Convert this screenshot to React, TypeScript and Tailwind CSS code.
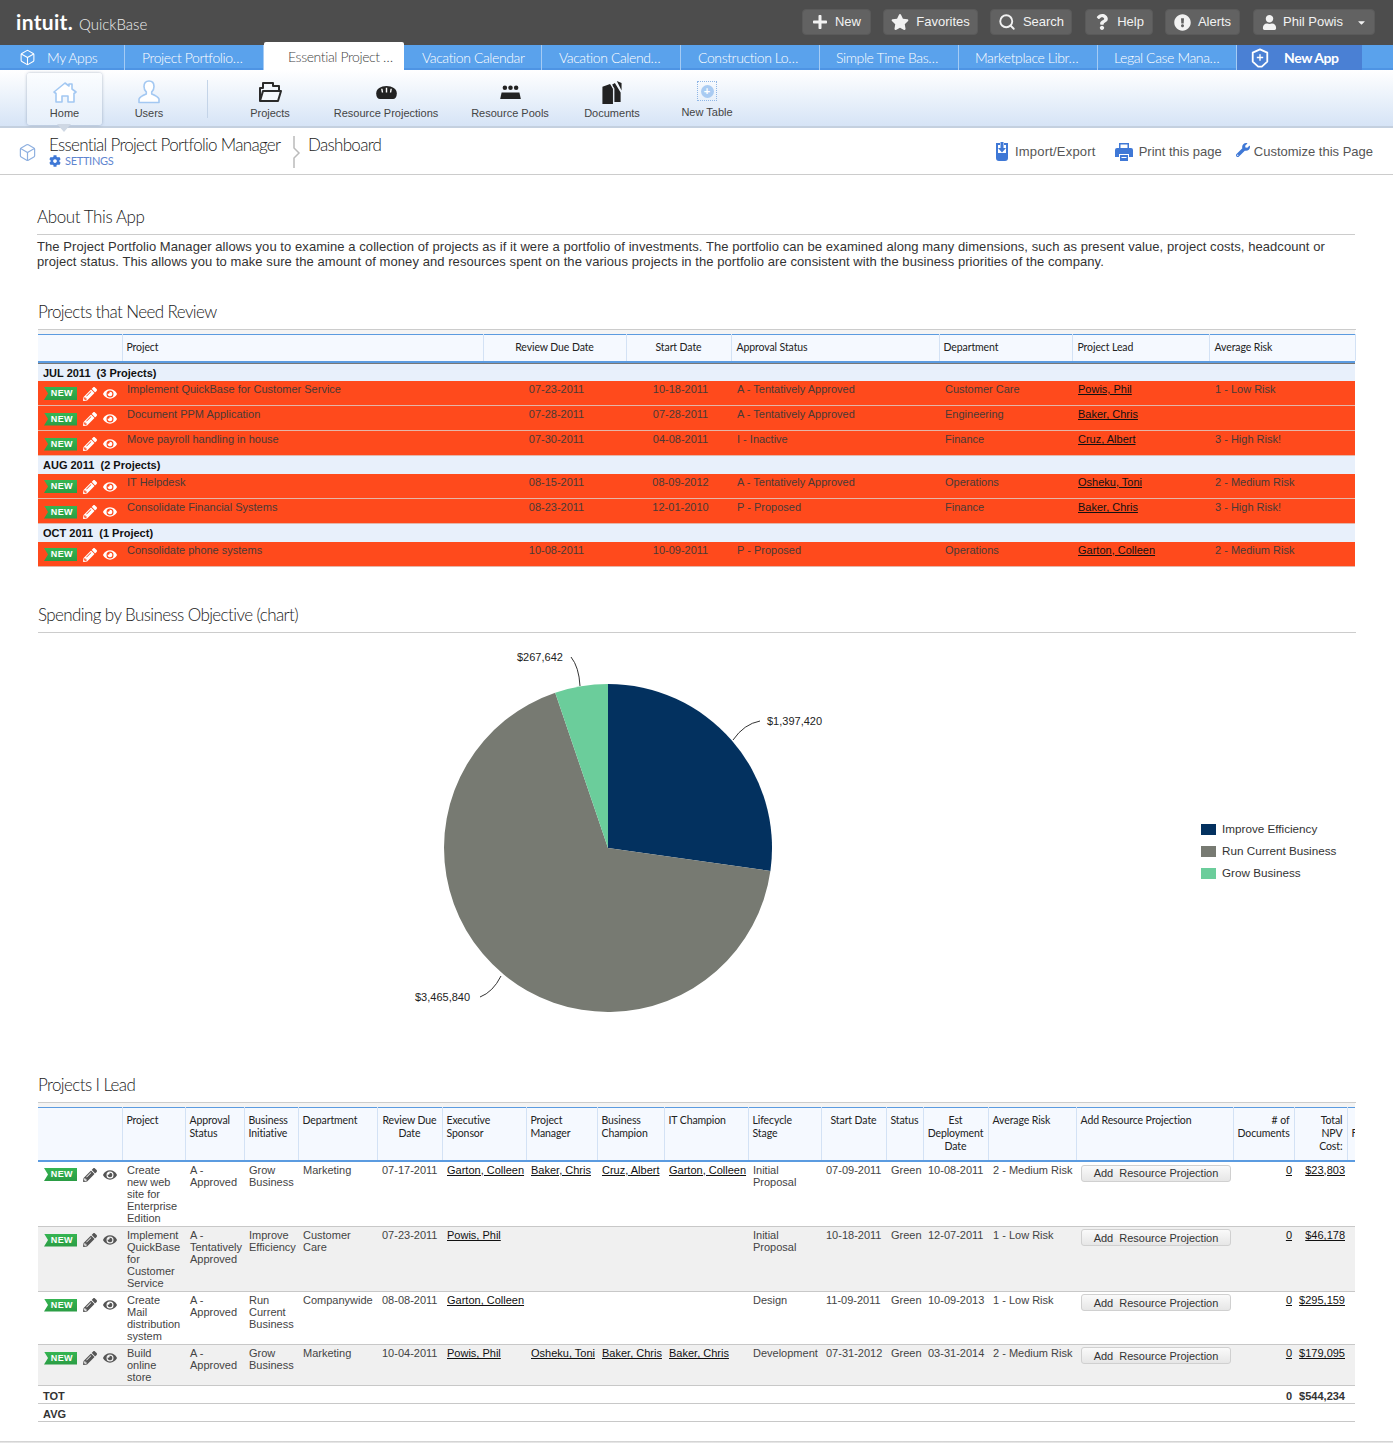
import { FaPlus, FaStar, FaQuestion, FaExclamationCircle, FaCaretDown, FaPencilAlt, FaEye, FaWrench, FaCog, FaUser } from "react-icons/fa";
import { Box, Search } from "lucide-react";

const gill = "[font-family:Lato,sans-serif]";

const tabs = [
  { label: "Project Portfolio…", w: "w-[139px]", pl: "pl-[17px]" },
  { label: "Essential Project …", active: true, w: "w-[140px]", pl: "pl-[24px]" },
  { label: "Vacation Calendar", w: "w-[138px]", pl: "pl-[18px]" },
  { label: "Vacation Calend…", w: "w-[139px]", pl: "pl-[17px]" },
  { label: "Construction Lo…", w: "w-[139px]", pl: "pl-[17px]" },
  { label: "Simple Time Bas…", w: "w-[139px]", pl: "pl-[16px]" },
  { label: "Marketplace Libr…", w: "w-[139px]", pl: "pl-[16px]" },
  { label: "Legal Case Mana…", w: "w-[139px]", pl: "pl-[16px]" },
];

function TopButton({ icon, label, w }: { icon: React.ReactNode; label: string; w: string }) {
  return (
    <div className={`flex h-[26px] ${w} items-center justify-center gap-[7px] rounded-[4px] border border-[#5a5a5a] bg-[#626262] text-[13px] text-[#f2f2f2]`}>
      {icon}
      <span>{label}</span>
    </div>
  );
}

function HomeIcon() {
  return (
    <svg viewBox="0 0 24 22" className="h-[22px] w-[24px]" fill="#ffffff" stroke="#a3c8f2" strokeWidth="1.6" strokeLinejoin="round">
      <path d="M1 11L12 2l4 3V3h3v5l4 3-2 1.500V21h-6v-6H9v6H3v-8.500z" />
    </svg>
  );
}

function UserIcon() {
  return (
    <svg viewBox="0 0 22 24" className="h-[24px] w-[22px]" fill="#ffffff" stroke="#a3c8f2" strokeWidth="1.6" strokeLinejoin="round">
      <path d="M11 1c3.500 0 5 2.500 5 5.500 0 2.500-1 4.500-2.300 5.500v2c2.500 1 6.300 2.500 7.300 5v3.500H1V19c1-2.500 4.800-4 7.300-5v-2C7 11 6 9 6 6.500 6 3.500 7.500 1 11 1z" />
    </svg>
  );
}

function FolderIcon() {
  return (
    <svg viewBox="0 0 24 22" className="h-[22px] w-[24px]" fill="none" stroke="#2a2a2a" strokeWidth="2" strokeLinejoin="round">
      <path d="M2 20V7h3V2h10v3h6v5" />
      <path d="M5 10h18l-3 10H2z" fill="#f4f7fb" />
    </svg>
  );
}

function Bread({ className }: { className?: string }) {
  return (
    <svg viewBox="0 0 24 16" className={className} fill="#222">
      <path d="M1 9C1 4 6 1 12 1s11 3 11 8c0 4-2 6-4 6H5c-2 0-4-2-4-6z" />
      <path d="M7 4l.7 4M12 3v5M17 4l-.7 4" stroke="#fff" strokeWidth="1.500" />
    </svg>
  );
}

function Pools({ className }: { className?: string }) {
  return (
    <svg viewBox="0 0 24 16" className={className} fill="#222">
      <circle cx="6" cy="3" r="2.400" />
      <circle cx="12" cy="3" r="2.400" />
      <circle cx="18" cy="3" r="2.400" />
      <path d="M2.500 8h19l1.500 7H1z" />
    </svg>
  );
}

function Docs({ className }: { className?: string }) {
  return (
    <svg viewBox="0 0 22 24" className={className} fill="#222">
      <path d="M1 6l8-3 3 5v16H1z" />
      <path d="M11 4l3-2 6 10v10h-7V8z" />
      <path d="M16 0l5 2v8z" />
      <path d="M10 3l3 5v15" fill="none" stroke="#eef4fc" strokeWidth="1" />
    </svg>
  );
}

function NewBadge() {
  return (
    <div className="flex h-[13px] w-[33px] items-center justify-end bg-gradient-to-b from-[#35b552] to-[#2a9c44] pr-[4px] text-[9px] font-bold leading-none tracking-[0.4px] text-white [clip-path:polygon(0_0,100%_0,100%_100%,0_100%,4px_50%)]">
      NEW
    </div>
  );
}

function RowIcons({ light }: { light?: boolean }) {
  const color = light ? "text-white" : "text-[#555555]";
  return (
    <div className="flex items-center pl-[6px] pt-[6px]">
      <NewBadge />
      <FaPencilAlt className={`ml-[6px] h-[14px] w-[14px] ${color}`} />
      <FaEye className={`ml-[6px] h-[14px] w-[14px] ${color}`} />
    </div>
  );
}

function Heading({ children, mt }: { children: React.ReactNode; mt: string }) {
  return (
    <h2 className={`${mt} h-[30px] w-[1318px] border-b border-[#cccccc] text-[17px] font-light leading-[24px] tracking-[-0.6px] text-[#222222] ${gill}`}>
      {children}
    </h2>
  );
}

const reviewCols = ["w-[84px]", "w-[361px]", "w-[143px]", "w-[105px]", "w-[208px]", "w-[133px]", "w-[137px]", "w-[146px]"];

const reviewGroups = [
  {
    label: "JUL 2011  (3 Projects)",
    h: "h-[17px]",
    rows: [
      ["Implement QuickBase for Customer Service", "07-23-2011", "10-18-2011", "A - Tentatively Approved", "Customer Care", "Powis, Phil", "1 - Low Risk"],
      ["Document PPM Application", "07-28-2011", "07-28-2011", "A - Tentatively Approved", "Engineering", "Baker, Chris", ""],
      ["Move payroll handling in house", "07-30-2011", "04-08-2011", "I - Inactive", "Finance", "Cruz, Albert", "3 - High Risk!"],
    ],
  },
  {
    label: "AUG 2011  (2 Projects)",
    h: "h-[18px]",
    rows: [
      ["IT Helpdesk", "08-15-2011", "08-09-2012", "A - Tentatively Approved", "Operations", "Osheku, Toni", "2 - Medium Risk"],
      ["Consolidate Financial Systems", "08-23-2011", "12-01-2010", "P - Proposed", "Finance", "Baker, Chris", "3 - High Risk!"],
    ],
  },
  {
    label: "OCT 2011  (1 Project)",
    h: "h-[18px]",
    rows: [["Consolidate phone systems", "10-08-2011", "10-09-2011", "P - Proposed", "Operations", "Garton, Colleen", "2 - Medium Risk"]],
  },
];

const leadCols = [84, 63, 59, 54, 79, 65, 84, 71, 67, 84, 73, 65, 37, 65, 88, 157, 61, 53, 8];

const leadHeaders: [string, string][] = [
  ["", "text-left"],
  ["Project", "text-left"],
  ["Approval\nStatus", "text-left"],
  ["Business\nInitiative", "text-left"],
  ["Department", "text-left"],
  ["Review Due\nDate", "text-center"],
  ["Executive\nSponsor", "text-left"],
  ["Project\nManager", "text-left"],
  ["Business\nChampion", "text-left"],
  ["IT Champion", "text-left"],
  ["Lifecycle\nStage", "text-left"],
  ["Start Date", "text-center"],
  ["Status", "text-left"],
  ["Est\nDeployment\nDate", "text-center"],
  ["Average Risk", "text-left"],
  ["Add Resource Projection", "text-left"],
  ["# of\nDocuments", "text-right"],
  ["Total\nNPV\nCost:", "text-right"],
];

const leadRows = [
  { h: "h-[65px]", bg: "bg-white", btn: "pt-[3px]", c: ["Create\nnew web\nsite for\nEnterprise\nEdition", "A -\nApproved", "Grow\nBusiness", "Marketing", "07-17-2011", "Garton, Colleen", "Baker, Chris", "Cruz, Albert", "Garton, Colleen", "Initial\nProposal", "07-09-2011", "Green", "10-08-2011", "2 - Medium Risk", "$23,803"] },
  { h: "h-[65px]", bg: "bg-[#f0f0f0]", btn: "pt-[2px]", c: ["Implement\nQuickBase\nfor\nCustomer\nService", "A -\nTentatively\nApproved", "Improve\nEfficiency", "Customer\nCare", "07-23-2011", "Powis, Phil", "", "", "", "Initial\nProposal", "10-18-2011", "Green", "12-07-2011", "1 - Low Risk", "$46,178"] },
  { h: "h-[53px]", bg: "bg-white", btn: "pt-[2px]", c: ["Create\nMail\ndistribution\nsystem", "A -\nApproved", "Run\nCurrent\nBusiness", "Companywide", "08-08-2011", "Garton, Colleen", "", "", "", "Design", "11-09-2011", "Green", "10-09-2013", "1 - Low Risk", "$295,159"] },
  { h: "h-[41px]", bg: "bg-[#f0f0f0]", btn: "pt-[2px]", c: ["Build\nonline\nstore", "A -\nApproved", "Grow\nBusiness", "Marketing", "10-04-2011", "Powis, Phil", "Osheku, Toni", "Baker, Chris", "Baker, Chris", "Development", "07-31-2012", "Green", "03-31-2014", "2 - Medium Risk", "$179,095"] },
];

export default function App() {
  return (
    <div className="h-[1443px] w-[1393px] overflow-hidden bg-white text-[11px] text-[#333333] [font-family:Liberation_Sans,sans-serif]">
      {/* top bar */}
      <div className="flex h-[45px] items-start bg-[#4d4d4d] pt-[9px]">
        <div className="flex items-baseline pl-[16px] text-white">
          <span className={`text-[21px] font-bold leading-[26px] tracking-[0.3px] ${gill}`}>intuit.</span>
          <span className={`ml-[6px] text-[15px] font-light leading-[26px] text-[#eeeeee] ${gill}`}>QuickBase</span>
        </div>
        <div className="ml-auto flex gap-[12px] pr-[18px]">
          <TopButton w="w-[69px]" label="New" icon={<FaPlus className="h-[16px] w-[16px]" />} />
          <TopButton w="w-[95px]" label="Favorites" icon={<FaStar className="h-[18px] w-[18px]" />} />
          <TopButton w="w-[82px]" label="Search" icon={<Search className="h-[18px] w-[18px]" strokeWidth={2.5} />} />
          <TopButton w="ml-px w-[68px]" label="Help" icon={<FaQuestion className="h-[16px] w-[16px]" />} />
          <TopButton w="w-[75px]" label="Alerts" icon={<FaExclamationCircle className="h-[17px] w-[17px]" />} />
          <div className="ml-px flex h-[26px] w-[122px] items-center rounded-[4px] border border-[#5a5a5a] bg-[#626262] pl-[8px] text-[13px] text-[#f2f2f2]">
            <FaUser className="h-[15px] w-[15px]" />
            <span className="ml-[6px]">Phil Powis</span>
            <FaCaretDown className="ml-auto mr-[7px] h-[11px] w-[11px]" />
          </div>
        </div>
      </div>

      {/* app tabs */}
      <div className={`relative flex h-[25px] border-b-2 border-[#4e94e4] bg-[#5aa2ec] text-[14px] font-light tracking-[-0.4px] text-white ${gill}`}>
        <div className="flex h-[25px] w-[125px] items-center border-r border-[#a5cbf4] pl-[19px]">
          <Box className="h-[17px] w-[17px]" strokeWidth={1.5} />
          <span className="ml-[11px]">My Apps</span>
        </div>
        {tabs.map((t) =>
          t.active ? (
            <div key={t.label} className={`z-10 -mt-[3px] flex h-[28px] ${t.w} items-center whitespace-nowrap rounded-t-[2px] bg-white ${t.pl} text-[#444444]`}>
              {t.label}
            </div>
          ) : (
            <div key={t.label} className={`flex h-[25px] ${t.w} items-center whitespace-nowrap border-r border-[#a5cbf4] ${t.pl}`}>
              {t.label}
            </div>
          ),
        )}
        <div className="flex h-[25px] w-[125px] items-center bg-[#4a80d4] pl-[13px] font-bold">
          <svg viewBox="0 0 20 22" className="h-[20px] w-[20px]" fill="none" stroke="#ffffff" strokeWidth="2" strokeLinejoin="round">
            <path d="M10 1.500l8 3.500v10l-6 5.500H8L2 15V5z" />
            <path d="M10 7v7M6.500 10.500h7" strokeWidth="1.500" />
          </svg>
          <span className="ml-[14px]">New App</span>
        </div>
      </div>

      {/* table toolbar */}
      <div className="relative flex h-[58px] border-b-2 border-[#c4d0df] bg-gradient-to-b from-white to-[#d6e4f6] text-[11px] text-[#444444]">
        <div className="relative ml-[27px] mt-[3px] flex h-[52px] w-[75px] flex-col items-center rounded-[3px] bg-gradient-to-b from-[#fbfdff] to-[#e6effa] pt-[8px] shadow-[0_0_3px_rgba(90,110,140,0.5)]">
          <HomeIcon />
          <span className="mt-[2px]">Home</span>
          <div className="absolute -bottom-[7px] left-[30px] h-0 w-0 border-x-[7px] border-t-[8px] border-x-transparent border-t-[#cfd8e4]" />
        </div>
        <div className="ml-[10px] flex w-[74px] flex-col items-center pt-[10px]">
          <UserIcon />
          <span className="mt-[1px]">Users</span>
        </div>
        <div className="ml-[21px] mt-[10px] h-[38px] w-px bg-[#c4d4e8]" />
        <div className="ml-[26px] flex w-[72px] flex-col items-center pt-[11px]">
          <FolderIcon />
          <span className="mt-[2px]">Projects</span>
        </div>
        <div className="ml-[20px] flex w-[120px] flex-col items-center pt-[11px]">
          <div className="flex h-[22px] items-center"><Bread className="h-[15px] w-[23px]" /></div>
          <span className="mt-[2px]">Resource Projections</span>
        </div>
        <div className="ml-[16px] flex w-[96px] flex-col items-center pt-[11px]">
          <div className="flex h-[22px] items-center"><Pools className="h-[15px] w-[23px]" /></div>
          <span className="mt-[2px]">Resource Pools</span>
        </div>
        <div className="ml-[16px] flex w-[76px] flex-col items-center pt-[11px]">
          <Docs className="h-[23px] w-[22px]" />
          <span className="mt-[1px]">Documents</span>
        </div>
        <div className="ml-[19px] flex w-[76px] flex-col items-center pt-[11px]">
          <div className="flex h-[20px] w-[20px] items-center justify-center border border-dotted border-[#8fb6e6]">
            <div className="flex h-[13px] w-[13px] items-center justify-center rounded-full bg-[#a9cbf2] text-[11px] font-bold leading-none text-white">+</div>
          </div>
          <span className="mt-[3px]">New Table</span>
        </div>
      </div>

      {/* page header */}
      <div className="flex h-[47px] items-start border-b border-[#cccccc] pl-[18px] pr-[20px]">
        <Box className="mt-[15px] h-[19px] w-[19px] text-[#8fb0e0]" strokeWidth={1.5} />
        <div className="ml-[12px] mt-[7px] w-[244px]">
          <div className={`whitespace-nowrap text-[17px] font-light leading-[20px] tracking-[-0.7px] text-[#222222] ${gill}`}>Essential Project Portfolio Manager</div>
          <div className={`-mt-px flex items-center text-[11px] leading-[13px] tracking-[-0.3px] text-[#5f86d0] ${gill}`}>
            <FaCog className="h-[12px] w-[12px] text-[#3f78d6]" />
            <span className="ml-[4px]">SETTINGS</span>
          </div>
        </div>
        <svg viewBox="0 0 8 32" className="mt-[8px] h-[32px] w-[8px]" fill="none" stroke="#bbbbbb" strokeWidth="1.5">
          <path d="M1 0v12l5 5-5 5v10" />
        </svg>
        <div className={`ml-[7px] mt-[7px] text-[17px] font-light leading-[20px] tracking-[-0.7px] text-[#222222] ${gill}`}>Dashboard</div>
        <div className="ml-auto flex items-center pt-[14px] text-[13px] text-[#555555]">
          <svg viewBox="0 0 12 19" className="h-[19px] w-[12px]" fill="#3f78d6">
            <path d="M0 1h4v2H2v8h8V3H8V1h4v15a3 3 0 0 1-3 3H3a3 3 0 0 1-3-3z" />
            <path d="M4.500 0h3v6H10L6 10.500 2 6h2.500z" />
          </svg>
          <span className="ml-[7px] tracking-[0.2px]">Import/Export</span>
          <svg viewBox="0 0 18 18" className="ml-[19px] h-[18px] w-[18px]" fill="#3f78d6">
            <path d="M4 0h10v5h-1.500V1.500h-7V5H4z" />
            <path d="M2 5h14a2 2 0 0 1 2 2v7h-4v-3H4v3H0V7a2 2 0 0 1 2-2z" />
            <path d="M5 12h8v6H5zM6.500 14h5v1h-5z" fillRule="evenodd" />
          </svg>
          <span className="ml-[6px]">Print this page</span>
          <FaWrench className="ml-[14px] -mt-[3px] h-[14px] w-[14px] text-[#3f78d6]" />
          <span className="ml-[4px]">Customize this Page</span>
        </div>
      </div>

      <div className="pl-[37px]">
        <Heading mt="mt-[30px]"><span className="tracking-[-0.4px]">About This App</span></Heading>
        <p className="mt-[4px] whitespace-pre-line text-[13px] leading-[15px] tracking-[0.067px] text-[#333333]">
          {"The Project Portfolio Manager allows you to examine a collection of projects as if it were a portfolio of investments. The portfolio can be examined along many dimensions, such as present value, project costs, headcount or\nproject status. This allows you to make sure the amount of money and resources spent on the various projects in the portfolio are consistent with the business priorities of the company."}
        </p>
      </div>

      <div className="pl-[38px]">
        <Heading mt="mt-[31px]">Projects that Need Review</Heading>
        <div className="h-[4px] w-[1317px] bg-[#f4f4f4]" />
        <table className="w-[1317px] table-fixed border-collapse">
          <colgroup>
            {reviewCols.map((c, i) => (
              <col key={i} className={c} />
            ))}
          </colgroup>
          <thead>
            <tr className={`h-[26px] border-t border-[#5b9be0] bg-[#f5f9ff] text-[10.5px] tracking-[-0.1px] text-[#222222] ${gill}`}>
              <th className="border-r border-[#d3e2f5] font-normal" />
              <th className="border-r border-[#d3e2f5] pl-[4px] text-left font-normal">Project</th>
              <th className="border-r border-[#d3e2f5] font-normal">Review Due Date</th>
              <th className="border-r border-[#d3e2f5] font-normal">Start Date</th>
              <th className="border-r border-[#d3e2f5] pl-[5px] text-left font-normal">Approval Status</th>
              <th className="border-r border-[#d3e2f5] pl-[4px] text-left font-normal">Department</th>
              <th className="border-r border-[#d3e2f5] pl-[5px] text-left font-normal">Project Lead</th>
              <th className="border-r border-[#d3e2f5] pl-[5px] text-left font-normal">Average Risk</th>
            </tr>
            <tr className="h-[3px] border-b border-[#777777] bg-[#5b9be0]">
              <th colSpan={8} />
            </tr>
          </thead>
          <tbody>
            {reviewGroups.map((g) => (
              <>
                <tr key={g.label} className={`${g.h} bg-[#e8f0fb]`}>
                  <td colSpan={8} className="whitespace-pre pl-[5px] pt-[1px] text-[11px] font-bold leading-[14px] text-[#111111]">
                    {g.label}
                  </td>
                </tr>
                {g.rows.map((r) => (
                  <tr key={r[0]} className="h-[25px] border-b border-[#e4b6a8] bg-[#ff4a1c] align-top leading-[12px] text-[#4a3a36]">
                    <td><RowIcons light /></td>
                    <td className="pl-[5px] pt-[2px]">{r[0]}</td>
                    <td className="pl-[4px] pt-[2px] text-center">{r[1]}</td>
                    <td className="pl-[4px] pt-[2px] text-center">{r[2]}</td>
                    <td className="pl-[6px] pt-[2px]">{r[3]}</td>
                    <td className="pl-[6px] pt-[2px]">{r[4]}</td>
                    <td className="pl-[6px] pt-[2px] text-[#111111] underline">{r[5]}</td>
                    <td className="pl-[6px] pt-[2px]">{r[6]}</td>
                  </tr>
                ))}
              </>
            ))}
          </tbody>
        </table>

        <Heading mt="mt-[36px]">Spending by Business Objective (chart)</Heading>
        <div className="flex h-[440px]">
          <svg viewBox="38 633 1163 440" className="h-[440px] w-[1163px]">
            <path d="M608 848V684A164 164 0 0 1 770.400 871z" fill="#03315f" />
            <path d="M608 848L770.400 871A164 164 0 1 1 555.200 692.700z" fill="#777a72" />
            <path d="M608 848L555.200 692.700A164 164 0 0 1 608 684z" fill="#6bcd9b" />
            <g fill="none" stroke="#333333" strokeWidth="1">
              <path d="M571 657q8 10 9 29" />
              <path d="M760 721q-16 3-27 19" />
              <path d="M501 976q-8 16-21 21" />
            </g>
            <g fontFamily="Liberation Sans" fontSize="11" fill="#222222">
              <text x="517" y="661">$267,642</text>
              <text x="767" y="725">$1,397,420</text>
              <text x="415" y="1001">$3,465,840</text>
            </g>
          </svg>
          <div className="flex flex-col gap-[8px] pt-[189px] text-[11.7px] leading-[14px] text-[#333333]">
            <div className="flex items-center gap-[6px]"><span className="h-[11px] w-[15px] bg-[#03315f]" />Improve Efficiency</div>
            <div className="flex items-center gap-[6px]"><span className="h-[11px] w-[15px] bg-[#777a72]" />Run Current Business</div>
            <div className="flex items-center gap-[6px]"><span className="h-[11px] w-[15px] bg-[#6bcd9b]" />Grow Business</div>
          </div>
        </div>

        <Heading mt="mt-0">Projects I Lead</Heading>
        <div className="h-[4px] w-[1317px] bg-[#f4f4f4]" />
        <table className="w-[1317px] table-fixed border-collapse">
          <colgroup>
            {leadCols.map((w, i) => (
              <col key={i} style={{ width: w }} />
            ))}
          </colgroup>
          <thead>
            <tr className={`h-[52px] border-t border-[#5b9be0] bg-[#f5f9ff] align-top text-[10.5px] leading-[13px] tracking-[-0.1px] text-[#222222] ${gill}`}>
              {leadHeaders.map(([h, align], i) => (
                <th key={i} className={`whitespace-pre-line border-r border-[#d3e2f5] px-[4px] pt-[6px] font-normal ${align}`}>
                  {h}
                </th>
              ))}
              <th className="overflow-hidden whitespace-pre-line pl-[4px] pt-[6px] text-left font-normal">{"\nF"}</th>
            </tr>
            <tr className="h-[2px] bg-[#5b9be0]">
              <th colSpan={19} />
            </tr>
          </thead>
          <tbody>
            {leadRows.map((r) => (
              <tr key={r.c[0]} className={`${r.h} border-b border-[#c8c8c8] ${r.bg} align-top leading-[12px] text-[#444444]`}>
                <td><RowIcons /></td>
                {r.c.slice(0, 14).map((v, i) => (
                  <td key={i} className={`overflow-visible whitespace-pre pl-[5px] pt-[2px] ${i >= 5 && i <= 8 ? "text-[#111111] underline" : ""}`}>
                    {v}
                  </td>
                ))}
                <td className={`pl-[5px] ${r.btn}`}>
                  <div className="flex h-[17px] w-[150px] items-center justify-center whitespace-pre rounded-[3px] border border-[#d0d0d0] bg-gradient-to-b from-[#fafafa] to-[#e6e6e6] text-[11px] text-[#333333]">
                    Add  Resource Projection
                  </div>
                </td>
                <td className="pr-[2px] pt-[2px] text-right text-[#111111] underline">0</td>
                <td className="pr-[2px] pt-[2px] text-right text-[#111111] underline">{r.c[14]}</td>
                <td />
              </tr>
            ))}
            <tr className="h-[18px] border-b border-[#c8c8c8] font-bold leading-[14px] text-[#333333]">
              <td className="pl-[5px] pt-[3px]">TOT</td>
              <td colSpan={15} />
              <td className="pr-[2px] pt-[3px] text-right">0</td>
              <td className="pr-[2px] pt-[3px] text-right">$544,234</td>
              <td />
            </tr>
            <tr className="h-[18px] border-b border-[#c8c8c8] font-bold leading-[14px] text-[#333333]">
              <td className="pl-[5px] pt-[3px]">AVG</td>
              <td colSpan={18} />
            </tr>
          </tbody>
        </table>
      </div>
      <div className="mt-[19px] h-[3px] bg-gradient-to-b from-[#cccccc] to-white" />
    </div>
  );
}
